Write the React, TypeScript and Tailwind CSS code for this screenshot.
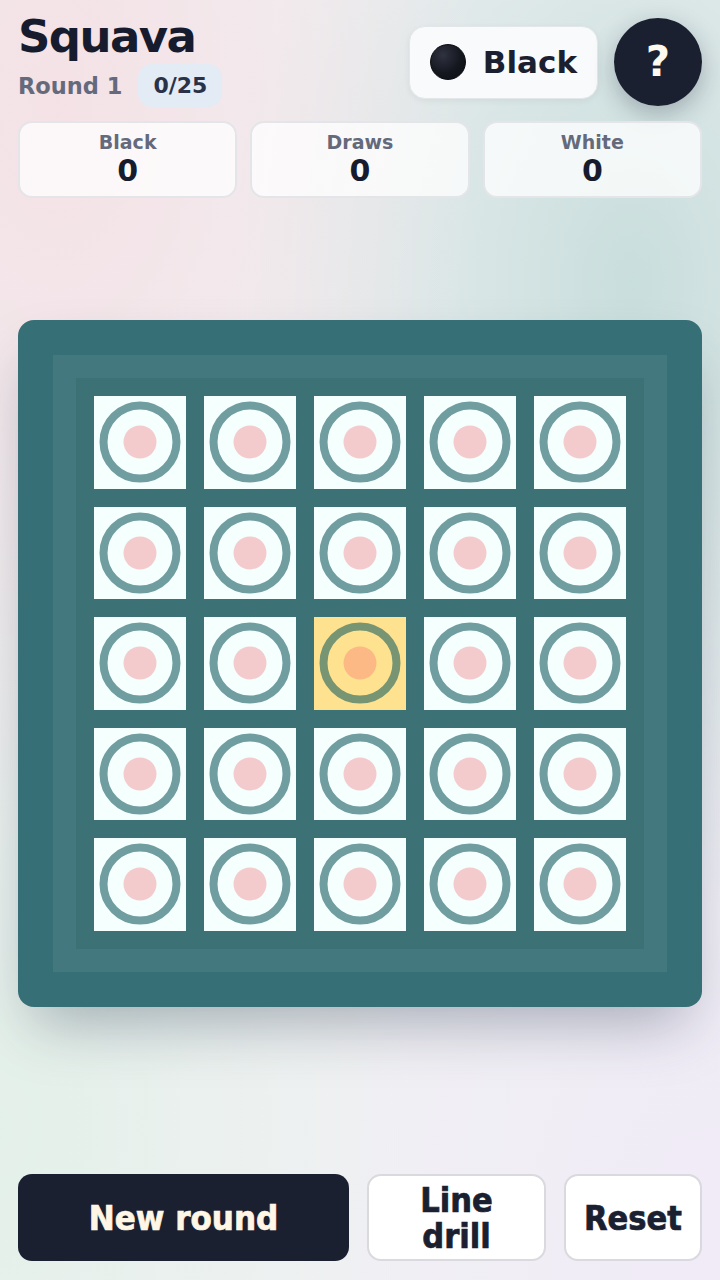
import React from "react";

function Cell({ active }: { active?: boolean }) {
  return (
    <div className={active ? "w-[92px] h-[92.5px] bg-[#ffe28f] flex items-center justify-center" : "w-[92px] h-[92.5px] bg-[#f5fffe] flex items-center justify-center"}>
      <svg width="92" height="92" viewBox="0 0 92 92">
        <circle cx="46" cy="46" r="36.5" fill="none" stroke={active ? "#779573" : "#6f9da0"} strokeWidth="8" />
        <circle cx="46" cy="46" r="16.5" fill={active ? "#fcb986" : "#f4cbcc"} />
      </svg>
    </div>
  );
}

function Score({ label }: { label: string }) {
  return (
    <div className="flex flex-col items-center rounded-[14px] border-2 border-[#e4e5e8] bg-white/75 pt-[8px] pb-[9px]">
      <div className="text-[19px] leading-[22px] font-bold text-[#646a7b]">{label}</div>
      <div className="mt-[2px] text-[30px] leading-[32px] font-bold text-[#161c2d]">0</div>
    </div>
  );
}

export default function App() {
  const cells = Array.from({ length: 25 }, (_, i) => i);
  return (
    <div className="relative w-[720px] h-[1280px] overflow-hidden flex flex-col px-[18px] pt-[14px] pb-[19px] font-['DejaVu_Sans',sans-serif] bg-[#f1f1f3] bg-[radial-gradient(ellipse_at_8%_8%,rgba(245,220,225,0.75),transparent_45%),radial-gradient(ellipse_at_88%_22%,rgba(196,220,218,0.9),transparent_45%),radial-gradient(ellipse_at_0%_88%,rgba(226,240,232,0.9),transparent_40%),radial-gradient(ellipse_at_100%_100%,rgba(240,234,248,0.9),transparent_45%)]">
      {/* Header */}
      <div className="flex justify-between items-start">
        <div className="flex flex-col">
          <div className="text-[45px] leading-none font-bold tracking-[-0.035em] text-[#161c2d]">Squava</div>
          <div className="mt-[5px] flex items-center gap-[16px]">
            <span className="text-[22.5px] leading-[26px] font-bold text-[#646a7b]">Round 1</span>
            <span className="rounded-[14px] bg-[#e3ebf5] px-[15px] py-[9px] text-[22px] leading-[25px] font-bold text-[#2a3248]">0/25</span>
          </div>
        </div>
        <div className="mt-[4px] flex items-center gap-[16px]">
          <div className="flex items-center gap-[17px] h-[73px] rounded-[16px] border border-[#e3e7ea] bg-[#f8fafb] pl-[20px] pr-[20px] shadow-[0_2px_6px_rgba(20,30,50,0.06)]">
            <div className="w-[36px] h-[36px] rounded-full border border-[#0a0c12] bg-[radial-gradient(circle_at_35%_30%,#2f3240,#15171f_55%,#0c0e15)]" />
            <span className="text-[31px] leading-none font-bold text-[#1b2031]">Black</span>
          </div>
          <div className="w-[88px] h-[88px] rounded-full bg-[#1b2031] flex items-center justify-center shadow-[0_8px_24px_rgba(20,30,50,0.28)]">
            <span className="text-[42px] leading-none font-bold text-[#fffaf0]">?</span>
          </div>
        </div>
      </div>

      {/* Scores */}
      <div className="mt-[14px] grid grid-cols-3 gap-[13px]">
        <Score label="Black" />
        <Score label="Draws" />
        <Score label="White" />
      </div>

      {/* Board */}
      <div className="mt-[122px] rounded-[16px] bg-[#366f76] p-[35px] shadow-[0_30px_60px_-15px_rgba(30,45,70,0.35)]">
        <div className="bg-[#44787f] p-[23px]">
          <div className="bg-[#3c7176] p-[18px] grid grid-cols-5 gap-x-[18px] gap-y-[18px]">
            {cells.map((i) => (
              <Cell key={i} active={i === 12} />
            ))}
          </div>
        </div>
      </div>

      <div className="flex-1" />

      {/* Buttons */}
      <div className="grid grid-cols-[331px_179px_138px] gap-[18px] h-[87px] font-['DejaVu_Sans_Condensed','DejaVu_Sans',sans-serif]">
        <button className="rounded-[14px] bg-[#1b2031] text-[#fff6e5] text-[34.5px] leading-[36px] font-bold [-webkit-text-stroke:0.7px_#fff6e5]">New round</button>
        <button className="rounded-[14px] bg-white border-2 border-[#d9d9de] text-[#1b2031] text-[34px] leading-[36px] font-bold [-webkit-text-stroke:0.7px_#1b2031]">Line<br />drill</button>
        <button className="rounded-[14px] bg-white border-2 border-[#d9d9de] text-[#1b2031] text-[34px] leading-[36px] font-bold [-webkit-text-stroke:0.7px_#1b2031]">Reset</button>
      </div>
    </div>
  );
}
